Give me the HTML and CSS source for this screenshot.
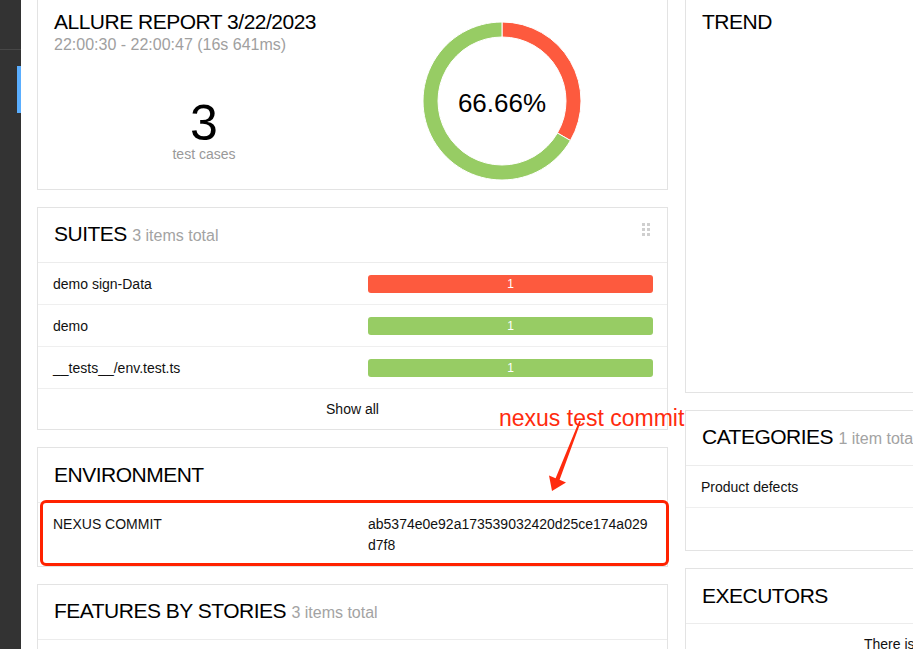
FILE: index.html
```html
<!DOCTYPE html>
<html lang="en">
<head>
<meta charset="utf-8">
<title>Allure Report</title>
<link rel="stylesheet" href="styles.css">
</head>
<body>
<div class="app">
  <aside class="sidebar">
    <div class="side-top"></div>
    <div class="side-item"><span class="side-active"></span></div>
  </aside>
  <main class="content">
    <div class="col">
      <section class="card summary">
        <div class="summary-left">
          <h1 class="big-title">ALLURE REPORT 3/22/2023</h1>
          <div class="report-time">22:00:30 - 22:00:47 (16s 641ms)</div>
          <div class="stat">
            <div class="stat-num">3</div>
            <div class="stat-label">test cases</div>
          </div>
        </div>
        <div class="summary-right">
          <svg class="donut" width="160" height="160" viewBox="0 0 160 160">
            <path d="M80 1 A79 79 0 0 1 148.42 119.5 L135.43 112 A64 64 0 0 0 80 16 Z" fill="#fd5a3e" stroke="#fff" stroke-width="1"/>
            <path d="M148.42 119.5 A79 79 0 1 1 80 1 L80 16 A64 64 0 1 0 135.43 112 Z" fill="#97cc64" stroke="#fff" stroke-width="1"/>
            <text x="80" y="90.5" text-anchor="middle" class="donut-text">66.66%</text>
          </svg>
        </div>
      </section>

      <section class="card">
        <header class="card-head">
          <h2 class="big-title">SUITES <span class="count">3 items total</span></h2>
          <svg class="handle" width="8" height="13" viewBox="0 0 8 13">
            <rect x="0" y="0" width="3" height="3"/><rect x="5" y="0" width="3" height="3"/>
            <rect x="0" y="5" width="3" height="3"/><rect x="5" y="5" width="3" height="3"/>
            <rect x="0" y="10" width="3" height="3"/><rect x="5" y="10" width="3" height="3"/>
          </svg>
        </header>
        <div class="row"><span>demo sign-Data</span><div class="bar bar-failed">1</div></div>
        <div class="row"><span>demo</span><div class="bar bar-passed">1</div></div>
        <div class="row"><span>__tests__/env.test.ts</span><div class="bar bar-passed">1</div></div>
        <div class="row-link">Show all</div>
      </section>

      <section class="card env">
        <header class="card-head">
          <h2 class="big-title">ENVIRONMENT</h2>
        </header>
        <div class="env-row">
          <span class="env-key">NEXUS COMMIT</span>
          <span class="env-val">ab5374e0e92a173539032420d25ce174a029d7f8</span>
        </div>
        <div class="highlight"></div>
      </section>

      <section class="card">
        <header class="card-head">
          <h2 class="big-title">FEATURES BY STORIES <span class="count">3 items total</span></h2>
        </header>
        <div class="row"></div>
      </section>
    </div>

    <div class="col">
      <section class="card trend">
        <h2 class="big-title">TREND</h2>
      </section>

      <section class="card">
        <header class="card-head">
          <h2 class="big-title">CATEGORIES <span class="count">1 item total</span></h2>
        </header>
        <div class="row"><span>Product defects</span></div>
        <div class="row-blank"></div>
      </section>

      <section class="card">
        <header class="card-head">
          <h2 class="big-title">EXECUTORS</h2>
        </header>
        <div class="empty">There is no information about test executors</div>
      </section>
    </div>
  </main>

  <div class="note">nexus test commit</div>
  <svg class="arrow" width="913" height="649" viewBox="0 0 913 649">
    <polygon points="579.3,420.7 580.9,421.4 559.6,479.7 566,482.4 552,491 549,475.6 555.6,478.3" fill="#ff2b0e"/>
  </svg>
</div>
</body>
</html>
```

FILE: styles.css
```css
* {
  box-sizing: border-box;
}

html, body {
  margin: 0;
  padding: 0;
  overflow: hidden;
  background: #fff;
}

body {
  font-family: "Liberation Sans", Arial, sans-serif;
  color: #111;
  font-size: 14px;
}

.app {
  position: relative;
  display: flex;
  height: 649px;
  width: 913px;
  overflow: hidden;
}

.sidebar {
  flex: none;
  width: 21px;
  height: 100%;
  background: #333;
  display: flex;
  flex-direction: column;
}

.side-top {
  height: 50px;
  border-bottom: 1px solid #474747;
}

.side-item {
  margin-top: 16px;
  height: 47px;
  display: flex;
  justify-content: flex-end;
}

.side-active {
  width: 4px;
  height: 100%;
  background: #5aaeff;
}

.content {
  flex: none;
  display: grid;
  grid-template-columns: 631px 631px;
  column-gap: 17px;
  align-items: start;
  padding: 0 16px;
  margin-top: -1px;
}

.col {
  display: flex;
  flex-direction: column;
  gap: 17px;
}

.card {
  position: relative;
  background: #fff;
  border: 1px solid #e3e3e3;
}

.big-title {
  margin: 0;
  font-size: 21px;
  font-weight: 400;
  line-height: 26px;
  letter-spacing: -0.5px;
  color: #000;
  white-space: nowrap;
}

.count {
  font-size: 16px;
  letter-spacing: 0;
  color: #a3a3a3;
}

/* summary */
.summary {
  height: 191px;
  display: grid;
  grid-template-columns: 300px 300px;
  padding: 9px 15px 0 16px;
}

.report-time {
  font-size: 16px;
  line-height: 20px;
  color: #a0a0a0;
  white-space: nowrap;
}

.stat {
  margin-top: 46px;
  text-align: center;
}

.stat-num {
  font-size: 50px;
  line-height: 44px;
  color: #000;
}

.stat-label {
  font-size: 14px;
  line-height: 18px;
  color: #999;
}

.summary-right {
  display: flex;
  justify-content: center;
  padding-top: 12px;
  padding-right: 4px;
}

.donut {
  display: block;
}

.donut-text {
  font-family: "Liberation Sans", Arial, sans-serif;
  font-size: 26px;
  fill: #000;
}

/* card head & rows */
.card-head {
  height: 55px;
  padding: 0 16px;
  display: flex;
  align-items: center;
  border-bottom: 1px solid #ececec;
}

.handle {
  margin-left: auto;
  align-self: flex-start;
  margin-top: 15px;
  margin-right: 1px;
  fill: #cfcfcf;
}

.row {
  height: 42px;
  padding: 0 14px 0 15px;
  display: grid;
  grid-template-columns: 1fr 285px;
  align-items: center;
  border-bottom: 1px solid #efefef;
  font-size: 14px;
  color: #111;
}

.bar {
  height: 18px;
  border-radius: 3px;
  color: #fff;
  font-size: 12px;
  line-height: 18px;
  text-align: center;
}

.bar-failed {
  background: #fd5a3e;
}

.bar-passed {
  background: #97cc64;
}

.row-link {
  height: 40px;
  line-height: 40px;
  text-align: center;
  font-size: 14px;
  color: #111;
}

.row-blank {
  height: 42px;
}

/* environment */
.env-row {
  display: grid;
  grid-template-columns: 1fr 285px;
  padding: 11px 14px 10px 15px;
  line-height: 21px;
  font-size: 14px;
}

.env-val {
  word-break: break-all;
}

.highlight {
  position: absolute;
  left: 2px;
  top: 52px;
  width: 629px;
  height: 66px;
  border: 3px solid #ff2200;
  border-radius: 6px;
}

/* right column */
.trend {
  height: 394px;
  padding: 9px 16px 0;
}

.empty {
  padding: 10px 15px;
  line-height: 20px;
  text-align: center;
  font-size: 14px;
  color: #111;
}

/* annotation overlay */
.note {
  position: absolute;
  left: 499px;
  top: 407px;
  font-size: 23px;
  line-height: 23px;
  color: #ff2b0e;
  white-space: nowrap;
}

.arrow {
  position: absolute;
  left: 0;
  top: 0;
  pointer-events: none;
}
```
